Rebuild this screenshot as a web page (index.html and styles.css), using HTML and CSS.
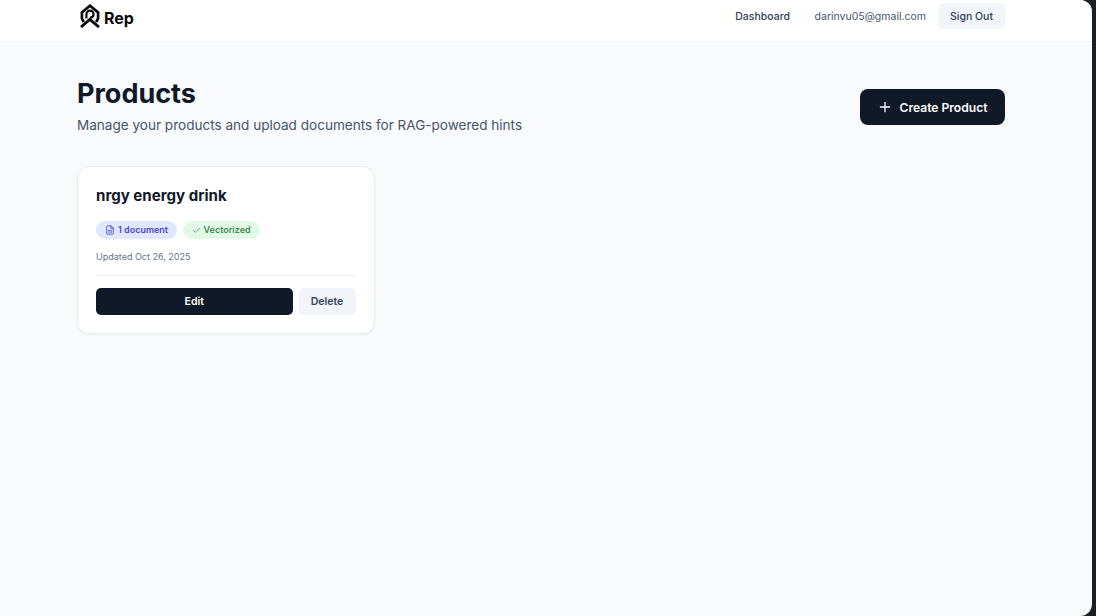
FILE: index.html
```html
<!DOCTYPE html>
<html lang="en">
<head>
  <meta charset="UTF-8">
  <title>Products</title>
  <link rel="stylesheet" href="styles.css">
</head>
<body>
  <div class="app">
    <nav class="topbar">
      <a class="logo" href="#">
        <svg class="logo-mark" viewBox="0 0 20 24" width="20" height="24" fill="none" stroke="#0b0b0f" stroke-width="2.7">
          <path d="M3.8 18 L1.9 14.5 V8.5 L10 1.7 L18.1 8.5 V14.5 L16.2 18"/>
          <path d="M6.4 14.5 V10.2 a3.6 3.6 0 0 1 7.2 0 a3.6 3.6 0 0 1 -3.6 3.4" stroke-width="2.2"/>
          <path d="M1 23 L9.8 15.5 L19 23" stroke-width="2.9"/>
        </svg>
        <span>Rep</span>
      </a>
      <div class="topbar-right">
        <a class="nav-link" href="#">Dashboard</a>
        <span class="nav-email">darinvu05@gmail.com</span>
        <button class="btn-signout">Sign Out</button>
      </div>
    </nav>

    <main class="content">
      <header class="page-head">
        <div>
          <h1>Products</h1>
          <p>Manage your products and upload documents for RAG-powered hints</p>
        </div>
        <button class="btn-create">
          <svg viewBox="0 0 24 24" width="14" height="14" fill="none" stroke="#fff" stroke-width="2.2" stroke-linecap="round">
            <path d="M12 4v16M4 12h16"/>
          </svg>
          Create Product
        </button>
      </header>

      <div class="product-grid">
        <article class="card">
          <h2>nrgy energy drink</h2>
          <div class="badges">
            <span class="badge badge-docs">
              <svg viewBox="0 0 24 24" width="10" height="10" fill="none" stroke="#4f46c8" stroke-width="2" stroke-linejoin="round" stroke-linecap="round">
                <path d="M14 2H6a2 2 0 0 0-2 2v16a2 2 0 0 0 2 2h12a2 2 0 0 0 2-2V8z"/>
                <path d="M14 2v6h6M8 13h8M8 17h8"/>
              </svg>
              <span>1 document</span>
            </span>
            <span class="badge badge-ok">
              <svg viewBox="0 0 24 24" width="9" height="9" fill="none" stroke="#3f8a4f" stroke-width="2" stroke-linejoin="round" stroke-linecap="round">
                <path d="M20 6 9 17l-5-5"/>
              </svg>
              <span>Vectorized</span>
            </span>
          </div>
          <p class="updated">Updated Oct 26, 2025</p>
          <div class="card-actions">
            <button class="btn-edit">Edit</button>
            <button class="btn-delete">Delete</button>
          </div>
        </article>
      </div>
    </main>
  </div>
</body>
</html>
```

FILE: styles.css
```css
* {
  box-sizing: border-box;
}

html, body {
  margin: 0;
  height: 100%;
  overflow: hidden;
}

body {
  font-family: 'Inter', sans-serif;
  background: #1e1f22;
  color: #111827;
}

button {
  font-family: inherit;
  border: none;
  cursor: pointer;
}

.app {
  width: 1092px;
  height: 616px;
  background: #f8fafc;
  border-radius: 0 12px 12px 0;
  overflow: hidden;
}

.topbar {
  height: 42px;
  background: #fff;
  border-bottom: 1px solid #f1f5f9;
  display: flex;
  justify-content: space-between;
  padding: 3px 87px 0 80px;
}

.logo {
  display: flex;
  gap: 4px;
  height: 26px;
  align-items: center;
  text-decoration: none;
  color: #0b0b0f;
  font-size: 16px;
  font-weight: 700;
}

.logo span {
  margin-top: 3px;
}

.topbar-right {
  display: flex;
  align-items: center;
  height: 26px;
  font-size: 10.5px;
}

.nav-link {
  color: #334155;
  font-weight: 500;
  text-decoration: none;
  margin-right: 24.5px;
}

.nav-email {
  color: #475569;
  margin-right: 12px;
}

.btn-signout {
  width: 67px;
  height: 26px;
  background: #f1f5f9;
  color: #334155;
  font-size: 10.5px;
  font-weight: 500;
  border-radius: 6px;
}

.content {
  padding: 0 87px 0 77px;
}

.page-head {
  display: flex;
  justify-content: space-between;
  align-items: center;
  padding-top: 34px;
}

h1 {
  margin: 0;
  font-size: 27px;
  line-height: 36px;
  font-weight: 700;
  color: #111827;
}

.page-head p {
  margin: 3px 0 0;
  font-size: 13.55px;
  line-height: 20px;
  color: #475569;
}

.btn-create {
  width: 145px;
  height: 36px;
  display: flex;
  align-items: center;
  justify-content: center;
  gap: 8px;
  margin-top: 3px;
  background: #111827;
  color: #fff;
  font-size: 12.1px;
  font-weight: 600;
  border-radius: 8px;
}

.product-grid {
  margin-top: 31px;
  display: grid;
  grid-template-columns: 297.5px;
}

.card {
  height: 168px;
  padding: 18px;
  background: #fff;
  border: 1px solid #e8edf3;
  border-radius: 12px;
  box-shadow: 0 1px 2px rgba(15, 23, 42, 0.05);
}

.card h2 {
  margin: 0 0 0 0;
  font-size: 15.1px;
  line-height: 21px;
  font-weight: 700;
  color: #111827;
}

.badges {
  display: flex;
  gap: 5.5px;
  margin-top: 15px;
}

.badge {
  display: inline-flex;
  align-items: center;
  gap: 3px;
  height: 18px;
  padding: 0 9px;
  border-radius: 9px;
  font-size: 9px;
  font-weight: 600;
}

.badge span {
  margin-bottom: 1px;
}

.badge-docs {
  background: #e0e7ff;
  color: #4f46c8;
}

.badge-ok {
  background: #e2f9e7;
  color: #3f8a4f;
}

.updated {
  margin: 12px 0 0;
  font-size: 9px;
  line-height: 12px;
  color: #64748b;
}

.card-actions {
  display: flex;
  gap: 6px;
  margin-top: 12px;
  padding-top: 12px;
  border-top: 1px solid #e8edf3;
}

.btn-edit {
  flex: 1;
  height: 27px;
  background: #111827;
  color: #fff;
  font-size: 10.5px;
  font-weight: 600;
  border-radius: 5px;
}

.btn-delete {
  width: 57px;
  height: 27px;
  background: #f1f5f9;
  color: #334155;
  font-size: 10.5px;
  font-weight: 600;
  border-radius: 5px;
}
```
